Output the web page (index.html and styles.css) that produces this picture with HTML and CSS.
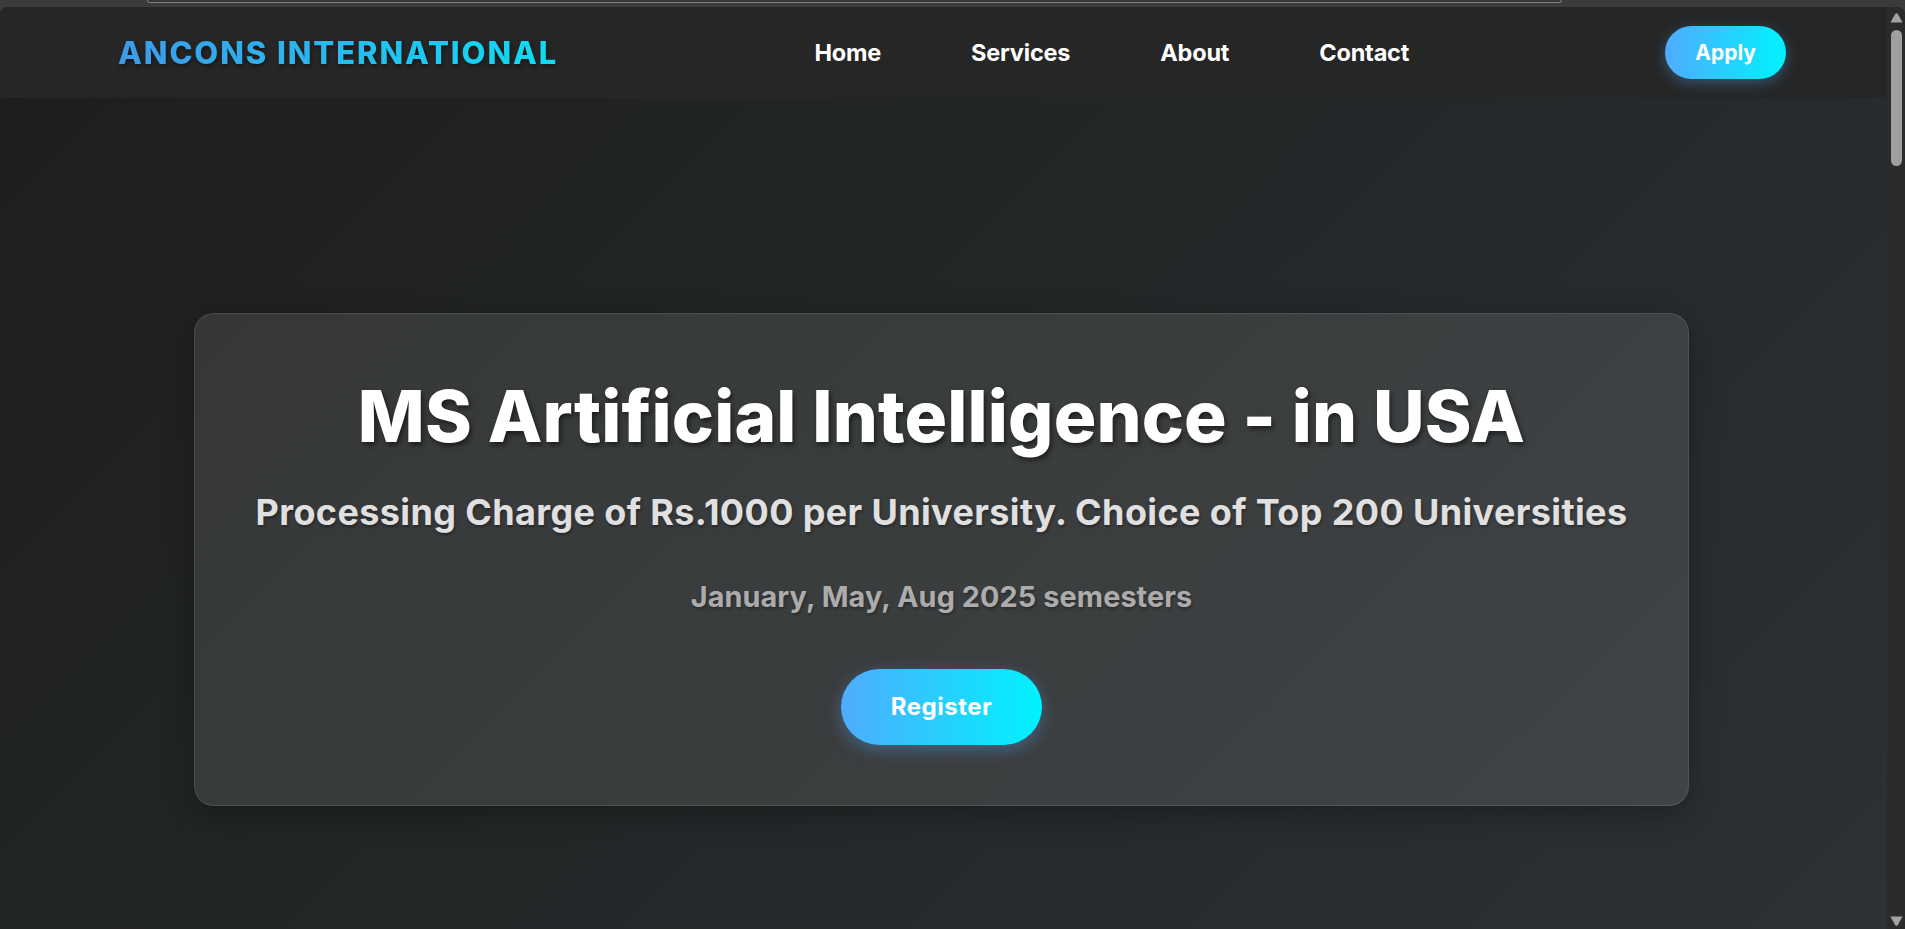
FILE: index.html
```html
<!DOCTYPE html>
<html lang="en">
<head>
<meta charset="utf-8">
<title>Ancons International</title>
<link rel="stylesheet" href="styles.css">
</head>
<body>
<div class="chrome"><div class="urlbar"></div></div>
<div class="window">
  <div class="page">
    <header class="topbar">
      <div class="logo">ANCONS INTERNATIONAL</div>
      <nav class="nav">
        <a class="nav-link" href="#">Home</a>
        <a class="nav-link" href="#">Services</a>
        <a class="nav-link" href="#">About</a>
        <a class="nav-link" href="#">Contact</a>
      </nav>
      <a class="btn btn-apply" href="#">Apply</a>
    </header>
    <main class="hero">
      <section class="card">
        <h1 class="title">MS Artificial Intelligence - in USA</h1>
        <h2 class="subtitle">Processing Charge of Rs.1000 per University. Choice of Top 200 Universities</h2>
        <p class="dates">January, May, Aug 2025 semesters</p>
        <a class="btn btn-register" href="#">Register</a>
      </section>
    </main>
  </div>
  <div class="scrollbar">
    <svg class="arrow arrow-up" width="13" height="10" viewBox="0 0 13 10"><path d="M5.3 0.8 Q6.5 -0.4 7.7 0.8 L12.6 9.6 L0.4 9.6 Z" fill="#a3a3a3"/></svg>
    <div class="thumb"></div>
    <div class="track-rest"></div>
    <svg class="arrow arrow-down" width="13" height="10" viewBox="0 0 13 10"><path d="M5.3 9.2 Q6.5 10.4 7.7 9.2 L12.6 0.4 L0.4 0.4 Z" fill="#a3a3a3"/></svg>
  </div>
</div>
</body>
</html>
```

FILE: styles.css
```css
* { box-sizing: border-box; }
html, body { margin: 0; padding: 0; }
body {
  width: 1905px;
  height: 929px;
  overflow: hidden;
  background: #3b3b3b;
  font-family: "Inter", "Noto Sans", sans-serif;
}
.chrome {
  height: 7px;
  background: #3b3b3b;
  padding-left: 147px;
}
.urlbar {
  width: 1415px;
  height: 3px;
  border: 1px solid #808080;
  border-top: 0;
  border-radius: 0 0 5px 5px;
  background: #353535;
}
.window {
  height: 922px;
  display: flex;
  border-radius: 8px 8px 0 0;
  overflow: hidden;
  background: #262626;
}
.page {
  flex: 1;
  display: flex;
  flex-direction: column;
  background: linear-gradient(135deg, #1d1e1e 0%, #242728 50%, #2c3134 100%);
}
.topbar {
  height: 91px;
  flex: none;
  background: #262626;
  display: flex;
  align-items: center;
  justify-content: space-between;
  padding: 0 101px 0 118px;
}
.logo {
  font-size: 31px;
  font-weight: 800;
  letter-spacing: 1.9px;
  line-height: 1;
  background: linear-gradient(90deg, #3e9ae9, #10dcf2);
  -webkit-background-clip: text;
  background-clip: text;
  color: transparent;
  filter: drop-shadow(1px 2px 2px rgba(0,0,0,0.45));
}
.nav {
  display: flex;
  gap: 90px;
}
.nav-link {
  color: #ffffff;
  text-decoration: none;
  font-size: 23.5px;
  font-weight: 700;
  letter-spacing: -0.2px;
}
.btn {
  display: inline-flex;
  align-items: center;
  justify-content: center;
  color: #ffffff;
  text-decoration: none;
  font-weight: 700;
  background: linear-gradient(90deg, #4facfe, #00f2fe);
  border-radius: 40px;
}
.btn-apply {
  height: 53px;
  padding: 0 30px;
  font-size: 21px;
  box-shadow: 0 4px 14px rgba(79, 172, 254, 0.35);
}
.hero {
  flex: 1;
  padding-top: 215px;
}
.card {
  width: 1495px;
  margin-left: 194px;
  padding: 60px 20px 60px;
  text-align: center;
  background: rgba(255, 255, 255, 0.1);
  border: 1px solid rgba(255, 255, 255, 0.1);
  border-radius: 20px;
  box-shadow: 0 8px 32px rgba(0, 0, 0, 0.3);
}
.title {
  margin: 0;
  font-size: 71px;
  font-weight: 800;
  line-height: 1.2;
  letter-spacing: 0.15px;
  color: #ffffff;
  text-shadow: 2px 3px 5px rgba(0, 0, 0, 0.5);
}
.subtitle {
  margin: 32px 0 0;
  font-size: 36px;
  font-weight: 700;
  line-height: 1.2;
  letter-spacing: 0.37px;
  color: #e0e0e0;
  text-shadow: 1px 2px 3px rgba(0, 0, 0, 0.35);
}
.dates {
  margin: 46px 0 0;
  font-size: 28.8px;
  font-weight: 700;
  line-height: 1.2;
  letter-spacing: 0.1px;
  color: #acacac;
  text-shadow: 1px 2px 3px rgba(0, 0, 0, 0.3);
}
.btn-register {
  margin-top: 54px;
  height: 76px;
  padding: 0 50px;
  font-size: 24px;
  letter-spacing: 0.5px;
  box-shadow: 0 5px 16px rgba(79, 172, 254, 0.35);
}
.scrollbar {
  width: 18px;
  flex: none;
  background: #2b2b2b;
  display: flex;
  flex-direction: column;
  align-items: center;
  padding: 6px 0 3px 1px;
}
.arrow { display: block; flex: none; }
.thumb {
  margin-top: 7px;
  width: 11px;
  height: 136px;
  border-radius: 6px;
  background: #9f9f9f;
  flex: none;
}
.track-rest { flex: 1; }
```
